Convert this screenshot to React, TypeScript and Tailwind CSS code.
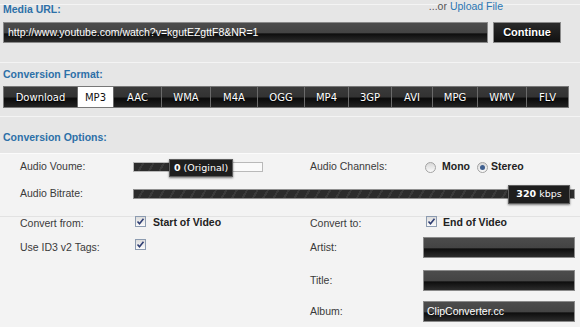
import React from "react";

const tabs = [
  { label: "Download", w: "w-[73px]" },
  { label: "MP3", w: "w-[36px]", active: true },
  { label: "AAC", w: "w-[48px]" },
  { label: "WMA", w: "w-[49px]" },
  { label: "M4A", w: "w-[47px]" },
  { label: "OGG", w: "w-[47px]" },
  { label: "MP4", w: "w-[44px]" },
  { label: "3GP", w: "w-[43px]" },
  { label: "AVI", w: "w-[41px]" },
  { label: "MPG", w: "w-[45px]" },
  { label: "WMV", w: "w-[49px]" },
  { label: "FLV", w: "w-[42px]" },
];

const darkField =
  "bg-[linear-gradient(#4c4c4c_0%,#444_50%,#0e0e0e_58%,#2c2c2c_100%)] border border-[#8a8a8a]";

const Check = () => (
  <span className="w-[11px] h-[11px] border border-[#8c9bb0] bg-[linear-gradient(#dcdcdc,#fbfbfb)] flex items-center justify-center">
    <svg width="9" height="9" viewBox="0 0 9 9">
      <path d="M1.5 4.5 L3.5 6.8 L7.5 1.8" fill="none" stroke="#2f3e73" strokeWidth="1.6" />
    </svg>
  </span>
);

const Radio = ({ on }: { on?: boolean }) => (
  <span className="w-[11px] h-[11px] rounded-full border border-[#a3a3a3] bg-[linear-gradient(#d8d8d8,#fafafa)] flex items-center justify-center">
    {on && <span className="w-[5px] h-[5px] rounded-full bg-[#3f5f8f]" />}
  </span>
);

const Tip = ({ children, pos }: { children: React.ReactNode; pos: string }) => (
  <div
    className={`absolute ${pos} bg-[#1e1e1e] border border-[#5e5e5e] shadow-[0_1px_2px_rgba(0,0,0,0.5)] text-white font-['DejaVu_Sans',Verdana,sans-serif] text-[9.5px] flex items-center justify-center whitespace-nowrap`}
  >
    {children}
  </div>
);

const stripes =
  "bg-[repeating-linear-gradient(120deg,#2c2c2c_0px,#2c2c2c_7px,#3b3b3b_7px,#3b3b3b_9px)]";

export default function App() {
  return (
    <div className="w-[580px] h-[327px] overflow-hidden bg-[#e6e6e6] font-['Liberation_Sans',Arial,sans-serif] text-[10.5px] flex flex-col">
      {/* Media URL */}
      <div className="h-[18px] px-[3px] flex justify-between items-start bg-[linear-gradient(to_bottom,transparent_4px,#f4f4f4_4px,#f4f4f4_5px,transparent_5px)]">
        <span className="pt-[3px] leading-[12px] font-bold text-[#2d70a8]">Media URL:</span>
        <span className="leading-[12px] mr-[74px] text-[#555]">
          ...or <span className="text-[#2b76b3]">Upload File</span>
        </span>
      </div>
      <div className="mt-[4px] px-[3px] flex gap-[5px]">
        <div className={`w-[485px] h-[21px] ${darkField} flex items-center pl-[4px] text-white`}>
          http://www.youtube.com/watch?v=kgutEZgttF8&amp;NR=1
        </div>
        <button className="w-[68px] h-[21px] border border-[#8a8a8a] bg-[linear-gradient(#2a2a2a,#111)] text-white font-bold text-[11px] [text-shadow:0_1px_1px_#000]">
          Continue
        </button>
      </div>

      {/* Format */}
      <div className="mt-[19px] h-px bg-[#f4f4f4]" />
      <div className="mt-[5px] px-[3px] leading-[12px] font-bold text-[#2d70a8]">Conversion Format:</div>
      <div className="mt-[6px] ml-[3px] flex h-[22px] w-fit border border-[#777]">
        {tabs.map((t, i) => (
          <div
            key={t.label}
            className={`${t.w} h-full flex items-center justify-center font-['DejaVu_Sans',Verdana,sans-serif] text-[10px] ${
              i > 0 ? "border-l border-[#6a6a6a]" : ""
            } ${
              t.active
                ? "bg-white text-[#111]"
                : "bg-[linear-gradient(#3a3a3a_0%,#333_48%,#0b0b0b_58%,#222_100%)] text-white [text-shadow:0_1px_1px_#000]"
            }`}
          >
            {t.label}
          </div>
        ))}
      </div>

      {/* Options */}
      <div className="mt-[8px] h-px bg-[#f4f4f4]" />
      <div className="mt-[14px] px-[3px] leading-[12px] font-bold text-[#2d70a8]">Conversion Options:</div>
      <div className="mt-[10px] flex-1 border-t border-[#fbfbfb] bg-[#f3f3f3] text-[#3a3a3a]">
        <div className="pl-[20px] grid grid-cols-[113px_177px_113px_152px]">
          {/* row 1 */}
          <div className="h-[26px] flex items-center">Audio Voume:</div>
          <div className="h-[26px] flex items-center">
            <div className="relative w-[130px] h-[10px] border border-[#b9b9b9] bg-[#fafafa] flex">
              <div className={`w-[36px] h-full ${stripes}`} />
              <Tip pos="left-[35px] top-[-4px] w-[64px] h-[18px]">
                <b>0</b>&nbsp;(Original)
              </Tip>
            </div>
          </div>
          <div className="h-[26px] flex items-center">Audio Channels:</div>
          <div className="h-[26px] flex items-center pl-[2px] font-bold text-[#222]">
            <Radio />
            <span className="ml-[6px]">Mono</span>
            <span className="ml-[7px]">
              <Radio on />
            </span>
            <span className="ml-[3px]">Stereo</span>
          </div>

          {/* row 2 */}
          <div className="h-[27px] flex items-center">Audio Bitrate:</div>
          <div className="col-span-3 h-[27px] flex items-center">
            <div className={`relative w-[442px] h-[10px] border border-[#8f8f8f] ${stripes}`}>
              <Tip pos="right-[4px] top-[-5px] w-[62px] h-[19px]">
                <b>320</b>&nbsp;kbps
              </Tip>
            </div>
          </div>
        </div>

        <div className="mt-[9px] h-px bg-[#e2e2e2]" />

        <div className="pl-[20px] grid grid-cols-[113px_177px_113px_152px]">
          {/* row 3 */}
          <div className="h-[11px] flex items-center leading-[12px]">Convert from:</div>
          <div className="h-[11px] flex items-start pl-[2px]">
            <div className="-mt-[3px] flex items-center">
              <Check />
              <span className="ml-[7px] font-bold text-[#222] leading-[12px] mt-[2px]">Start of Video</span>
            </div>
          </div>
          <div className="h-[11px] flex items-center leading-[12px]">Convert to:</div>
          <div className="h-[11px] flex items-start pl-[3px]">
            <div className="-mt-[3px] flex items-center">
              <Check />
              <span className="ml-[6px] font-bold text-[#222] leading-[12px] mt-[2px]">End of Video</span>
            </div>
          </div>

          {/* row 4 */}
          <div className="mt-[9px] h-[21px] flex items-center">Use ID3 v2 Tags:</div>
          <div className="mt-[9px] h-[21px] flex items-start pl-[2px] pt-[2px]">
            <Check />
          </div>
          <div className="mt-[9px] h-[21px] flex items-center">Artist:</div>
          <div className={`mt-[9px] h-[21px] ${darkField}`} />

          {/* row 5 */}
          <div className="col-span-2" />
          <div className="mt-[12px] h-[21px] flex items-center">Title:</div>
          <div className={`mt-[12px] h-[21px] ${darkField}`} />

          {/* row 6 */}
          <div className="col-span-2" />
          <div className="mt-[10px] h-[21px] flex items-center">Album:</div>
          <div className={`mt-[10px] h-[21px] ${darkField} flex items-center pl-[3px] text-white`}>
            ClipConverter.cc
          </div>
        </div>
      </div>
    </div>
  );
}
